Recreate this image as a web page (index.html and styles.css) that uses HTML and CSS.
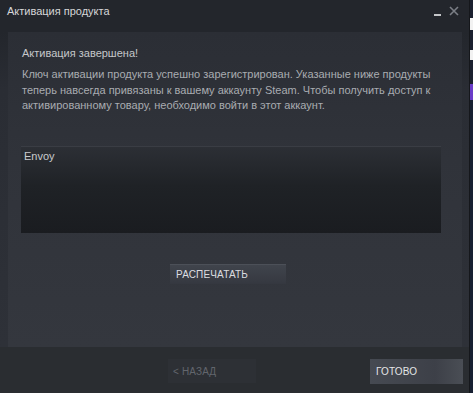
FILE: index.html
```html
<!DOCTYPE html>
<html>
<head>
<meta charset="utf-8">
<link rel="stylesheet" href="styles.css">
</head>
<body>
<div class="screen">
  <div class="window">
    <div class="titlebar">
      <span class="title">Активация продукта</span>
      <div class="controls">
        <span class="min"></span>
        <svg class="close" width="10" height="10" viewBox="0 0 10 10"><path d="M1 1L9 9M9 1L1 9" stroke="#7b7f86" stroke-width="1.6"/></svg>
      </div>
    </div>
    <div class="panel">
      <div class="heading">Активация завершена!</div>
      <p class="desc">Ключ активации продукта успешно зарегистрирован. Указанные ниже продукты теперь навсегда привязаны к вашему аккаунту Steam. Чтобы получить доступ к активированному товару, необходимо войти в этот аккаунт.</p>
      <div class="products">Envoy</div>
      <div class="print-row"><button class="btn print">РАСПЕЧАТАТЬ</button></div>
    </div>
    <div class="footer">
      <button class="btn back">&lt; НАЗАД</button>
      <button class="btn done">ГОТОВО</button>
    </div>
  </div>
  <div class="edge"></div>
</div>
</body>
</html>
```
FILE: styles.css
```css
* { box-sizing: border-box; }
html, body { margin: 0; padding: 0; }
body {
  width: 473px;
  height: 393px;
  overflow: hidden;
  background: #22252b;
  font-family: "Liberation Sans", Arial, sans-serif;
}
.screen { display: flex; width: 473px; height: 393px; }
.window {
  width: 470px;
  height: 393px;
  background: linear-gradient(#23262c 0, #23262c 32px, #2a2d34 90px, #2e3138 347px);
  display: flex;
  flex-direction: column;
  border-right: 1px solid #15171b;
}
.titlebar {
  height: 32px;
  display: flex;
  align-items: flex-start;
  justify-content: space-between;
  padding: 4px 10px 0 7px;
}
.title { color: #d6d7d9; font-size: 11px; line-height: 14px; }
.controls { display: flex; align-items: center; gap: 8px; padding-top: 2px; }
.min { width: 7px; height: 2px; background: #c4c6c9; margin-top: 8px; }
.close { display: block; }
.panel {
  margin: 0 7px 0 8px;
  height: 315px;
  background: linear-gradient(#2b2e35, #30333a 40%, #34373e);
  padding: 14px 14px 0 13px;
  display: flex;
  flex-direction: column;
}
.heading { color: #c5c7ca; font-size: 11px; line-height: 14px; padding-left: 1px; }
.desc {
  margin: 7px 0 0;
  color: #a9acb1;
  font-size: 11px;
  line-height: 15.5px;
  padding-left: 1px;
  width: 422px;
}
.products {
  margin-top: 32px;
  width: 420px;
  height: 87px;
  background: linear-gradient(#2c2f35, #1f2226 45%, #1a1c20);
  border-top: 1px solid #3a3d44;
  color: #c9cbce;
  font-size: 11px;
  padding: 3px 3px;
}
.print-row { display: flex; padding-left: 149px; margin-top: 31px; }
.btn {
  font-family: "Liberation Sans", Arial, sans-serif;
  border: none;
  padding: 0 6px;
  text-align: left;
  font-size: 10px;
  letter-spacing: 0.15px;
}
.print {
  width: 116px;
  height: 20px;
  background: linear-gradient(#40444c, #353840);
  color: #dcdde0;
  border-top: 1px solid #4c5058;
}
.footer {
  flex: 1;
  display: flex;
  align-items: flex-start;
  padding: 12px 0 0 168px;
  background: #2a2d31;
}
.back {
  width: 88px;
  height: 24px;
  background: #2d3035;
  color: #62666d;
  padding-left: 5px;
}
.done {
  margin-left: 114px;
  width: 93px;
  height: 25px;
  background: linear-gradient(90deg, #464a52, #3d4048 70%, #4a4e55);
  color: #e4e5e7;
  padding-left: 6px;
}
.edge {
  width: 3px;
  height: 393px;
  background: linear-gradient(#1b2030 0, #1b2030 18px, #f2f2f2 18px, #f2f2f2 30px, #1b2030 30px, #1b2030 50px, #f2f2f2 50px, #f2f2f2 60px, #1b2030 60px, #1b2030 84px, #6a3cc8 84px, #6a3cc8 100px, #172033 100px);
}
```
